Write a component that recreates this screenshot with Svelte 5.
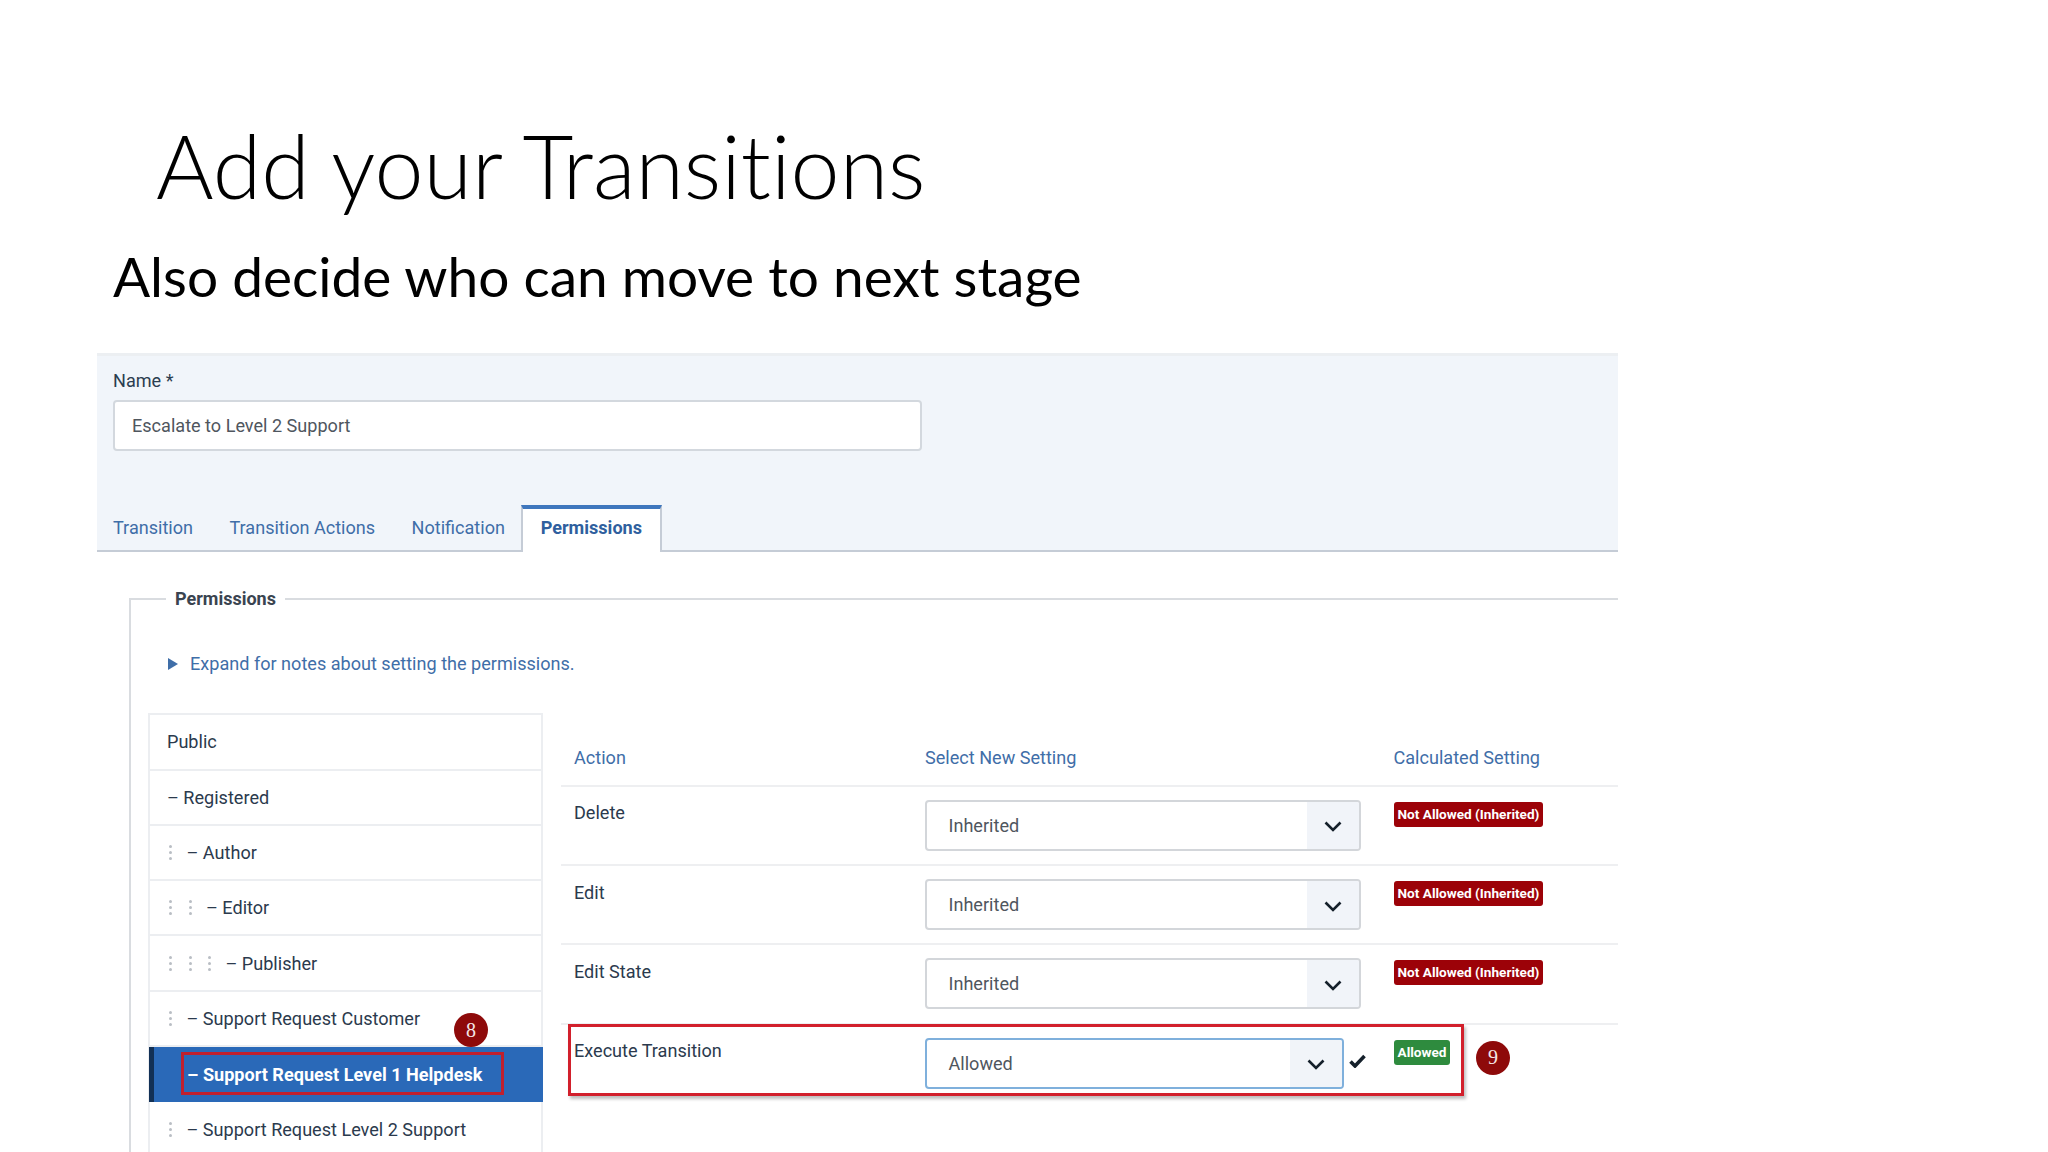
<script>
  const groups = [
    { name: 'Public', depth: 0, dash: false },
    { name: 'Registered', depth: 0, dash: true },
    { name: 'Author', depth: 1, dash: true },
    { name: 'Editor', depth: 2, dash: true },
    { name: 'Publisher', depth: 3, dash: true },
    { name: 'Support Request Customer', depth: 1, dash: true },
    { name: 'Support Request Level 1 Helpdesk', depth: 1, dash: true, active: true },
    { name: 'Support Request Level 2 Support', depth: 1, dash: true }
  ];
  const actions = [
    { name: 'Delete', value: 'Inherited', badge: 'Not Allowed (Inherited)' },
    { name: 'Edit', value: 'Inherited', badge: 'Not Allowed (Inherited)' },
    { name: 'Edit State', value: 'Inherited', badge: 'Not Allowed (Inherited)' },
    { name: 'Execute Transition', value: 'Allowed', badge: 'Allowed', ok: true }
  ];
  const tabs = ['Transition', 'Transition Actions', 'Notification', 'Permissions'];
</script>

<div class="slide">
  <h1>Add your Transitions</h1>
  <h2>Also decide who can move to next stage</h2>

  <section class="panel">
    <div class="label">Name *</div>
    <div class="input">Escalate to Level 2 Support</div>
    <nav class="tabs">
      {#each tabs as t, i}
        <div class="tab" class:on={i === 3}>{t}</div>
      {/each}
    </nav>
  </section>

  <fieldset>
    <legend>Permissions</legend>
    <div class="expand">
      <svg width="10" height="12" viewBox="0 0 10 12"><path d="M0 0 L10 6 L0 12 Z" fill="#3f6ea8" /></svg>
      <span>Expand for notes about setting the permissions.</span>
    </div>

    <div class="columns">
      <ul class="groups">
        {#each groups as g}
          <li class:active={g.active}>
            {#if g.active}
              <span class="hl"></span>
              <span class="num eight">8</span>
            {/if}
            {#each Array(g.active ? 0 : g.depth) as _}
              <span class="dots"><i></i><i></i><i></i></span>
            {/each}
            {#if g.active}<span class="spacer"></span>{/if}
            <span>{g.dash ? '– ' : ''}{g.name}</span>
          </li>
        {/each}
      </ul>

      <div class="table">
        <div class="row head">
          <div>Action</div>
          <div>Select New Setting</div>
          <div>Calculated Setting</div>
        </div>
        {#each actions as a}
          <div class="row" class:ok={a.ok}>
            {#if a.ok}
              <span class="redbox"></span>
              <span class="num nine">9</span>
            {/if}
            <div class="act">{a.name}</div>
            <div class="cell">
              <div class="select">
                <span class="val">{a.value}</span>
                <span class="chev">
                  <svg width="18" height="11" viewBox="0 0 18 11"><path d="M1.5 1.5 L9 9 L16.500 1.500" fill="none" stroke="#15202b" stroke-width="2.600" /></svg>
                </span>
              </div>
              {#if a.ok}
                <svg class="check" width="17" height="14" viewBox="0 0 17 14"><path d="M1.500 7.500 L6 12 L15.500 2" fill="none" stroke="#15202b" stroke-width="3.600" /></svg>
              {/if}
            </div>
            <div><span class="badge">{a.badge}</span></div>
          </div>
        {/each}
      </div>
    </div>
  </fieldset>
</div>

<style>
  :global(body) { margin: 0; background: #fff; }
  .slide {
    width: 2048px; height: 1152px; overflow: hidden; background: #fff;
    font-family: Roboto, "Liberation Sans", sans-serif; color: #2b3a4d; font-size: 18.080px;
    box-sizing: border-box; padding-top: 119px;
  }
  h1 {
    margin: 0; padding-left: 156px; font-family: Lato, sans-serif; font-weight: 300;
    font-size: 88px; line-height: 92px; color: #000; font-variant-ligatures: none;
  }
  h2 {
    margin: 0; padding: 32px 0 0 113px; font-family: Lato, sans-serif; font-weight: 400;
    font-size: 55px; line-height: 66px; color: #000; font-variant-ligatures: none;
  }
  .panel {
    margin: 44.300px 0 0 97px; width: 1521px; height: 198.500px; box-sizing: border-box;
    background: #f1f5fa; border-top: 3px solid #eceff2; border-bottom: 2px solid #c5ccd6;
    padding: 12px 0 0 16px; position: relative;
  }
  .label { line-height: 26px; color: #2b3d50; }
  .input {
    margin-top: 6px; width: 809px; height: 51px; box-sizing: border-box; background: #fff;
    border: 2px solid #d3d8de; border-radius: 4px; padding-left: 17px; line-height: 47px; color: #4f565e;
  }
  .tabs { display: flex; margin-top: 53.500px; margin-left: -18.200px; height: 47px; }
  .tab { padding: 0 18.200px; line-height: 45px; color: #3f6ea8; }
  .tab.on {
    background: #fff; font-weight: 700; color: #2f5f9e; height: 47.500px; box-sizing: border-box;
    border: 2px solid #c5ccd6; border-top: 4px solid #3f77bd; border-bottom: 0; line-height: 38px; margin-left: -2.500px; padding: 0 17.500px 0 18px;
  }
  fieldset {
    margin: 35.500px 0 0 129px; padding: 0 0 0 17px; width: 1489px; box-sizing: border-box;
    border: 0; border-top: 2px solid #d9dce0; border-left: 2px solid #d9dce0; min-width: 0;
  }
  legend { padding: 0 9px; margin-left: 18px; font-weight: 700; color: #3a4450; line-height: 24px; font-size: 18px; }
  .expand { display: flex; align-items: center; gap: 12px; padding-left: 20px; margin-top: 40px; line-height: 26px; color: #3f6ea8; }
  .columns { display: flex; gap: 18px; margin-top: 36px; }
  .groups {
    list-style: none; margin: 0; padding: 0; width: 395px; flex: none; box-sizing: border-box;
    border: 2px solid #eceef1; border-bottom: 0; 
  }
  .groups li {
    height: 55.300px; box-sizing: border-box; display: flex; align-items: center; padding-left: 17px;
    border-bottom: 2px solid #eceef1; position: relative; color: #2b3a4d;
  }
  .groups li.active {
    background: #2a69b8; color: #fff; font-weight: 700; border-bottom: 0; border-left: 5px solid #123055;
    margin-left: -1px; margin-right: -2px; padding-left: 0;
  }
  .spacer { width: 33px; }
  .dots { width: 19.500px; display: inline-flex; flex-direction: column; gap: 3px; flex: none; }
  .dots i { width: 3px; height: 3px; margin-left: 2px; border-radius: 50%; background: #b9bec4; display: block; }
  .hl { position: absolute; left: 27px; top: 5px; width: 323px; height: 43px; border: 3px solid #c0202e; box-sizing: border-box; }
  .num {
    position: absolute; width: 34px; height: 34px; border-radius: 50%; background: #8e0a0a; color: #f4e6e6;
    display: flex; align-items: center; justify-content: center; font-family: "Liberation Serif", serif; font-size: 20px; font-weight: 400;
  }
  .eight { left: 300px; top: -34px; }
  .table { flex: 1; min-width: 0; }
  .row {
    display: grid; grid-template-columns: 351px 468.500px 1fr; padding-left: 13px; height: 79.300px; box-sizing: border-box;
    border-top: 2px solid #eeeff1; position: relative;
  }
  .row.head { border-top: 0; height: 71.500px; padding-top: 32px; line-height: 26px; color: #3f6ea8; }
  .act { padding-top: 13.500px; line-height: 26px; }
  .cell { display: flex; align-items: flex-start; padding-top: 13px; gap: 5px; }
  .select {
    width: 436px; height: 51px; box-sizing: border-box; border: 2px solid #d3d6da; border-radius: 4px;
    display: flex; justify-content: space-between; background: #fff; overflow: hidden; color: #4f565e;
  }
  .val { padding-left: 21.500px; line-height: 47px; }
  .chev { width: 52px; padding-top: 3px; box-sizing: border-box; background: #f1f4f9; display: flex; align-items: center; justify-content: center; }
  .ok .select { width: 418.500px; border-color: #7fb0dc; }
  .check { margin-top: 16px; }
  .badge {
    display: inline-block; margin-top: 15px; height: 25px; line-height: 25px; padding: 0 4px; background: #9c0208; color: #fff; font-weight: 700;
    font-size: 13.600px; border-radius: 3px;
  }
  .ok .badge { background: #2e8b3e; }
  .redbox { position: absolute; left: 7px; top: -1px; width: 896px; height: 72px; border: 3px solid #d2202c; box-sizing: border-box; box-shadow: 2px 3px 3px rgba(0,0,0,.25); }
  .nine { left: 915px; top: 16px; }
</style>
